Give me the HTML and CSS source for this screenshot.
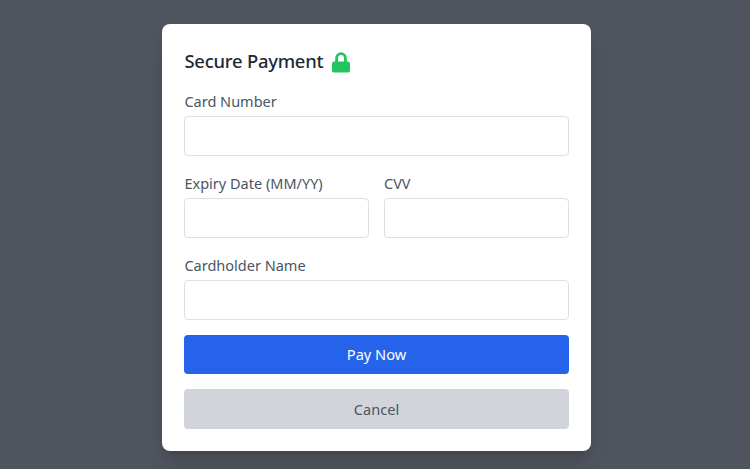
FILE: index.html
```html
<!DOCTYPE html>
<html lang="en">
<head>
<meta charset="utf-8">
<title>Secure Payment</title>
<link rel="stylesheet" href="styles.css">
</head>
<body>
<main class="card">
  <h1 class="title">Secure Payment
    <svg class="lock" viewBox="0 0 18 21" width="18" height="21" aria-hidden="true">
      <path d="M4.6 10V6a4.4 4.4 0 0 1 8.8 0V10" fill="none" stroke="#22c55e" stroke-width="2.8"/>
      <rect x="0" y="9.6" width="18" height="11" rx="2.2" fill="#22c55e"/>
    </svg>
  </h1>
  <form class="form">
    <div class="field">
      <label class="label">Card Number</label>
      <input class="input" type="text">
    </div>
    <div class="row">
      <div class="field">
        <label class="label">Expiry Date (MM/YY)</label>
        <input class="input" type="text">
      </div>
      <div class="field">
        <label class="label">CVV</label>
        <input class="input" type="text">
      </div>
    </div>
    <div class="field">
      <label class="label">Cardholder Name</label>
      <input class="input" type="text">
    </div>
    <button class="btn primary" type="button">Pay Now</button>
    <button class="btn secondary" type="button">Cancel</button>
  </form>
</main>
</body>
</html>
```
FILE: styles.css
```css
* { box-sizing: border-box; }
html, body { height: 100%; }
body {
  margin: 0;
  padding: 6px 0 0 3px;
  background: #50545f;
  display: flex;
  align-items: center;
  justify-content: center;
  font-family: "Noto Sans", sans-serif;
}
.card {
  width: 429.5px;
  height: 427px;
  padding: 22px 22.7px;
  background: #fff;
  border-radius: 8px;
  box-shadow: 0 14px 20px -4px rgba(0,0,0,.14), 0 6px 8px -4px rgba(0,0,0,.12);
}
.title {
  margin: 0 0 14.7px;
  height: 30px;
  display: flex;
  align-items: center;
  gap: 8.5px;
  font-size: 18.4px;
  font-weight: 500;
  letter-spacing: -0.22px;
  line-height: 30px;
  color: #1f2937;
}
.lock { margin-top: 2px; }
.form { display: flex; flex-direction: column; gap: 15px; }
.field { display: flex; flex-direction: column; min-width: 0; flex: 1; }
.row { display: flex; gap: 15px; margin-top: 2px; }
.row + .field { margin-top: 2px; }
.label {
  height: 21px;
  margin-bottom: 4px;
  font-size: 14.5px;
  line-height: 21px;
  color: #4b5563;
}
.input {
  width: 100%;
  height: 40px;
  border: 1px solid #dcdfe4;
  border-radius: 4px;
  background: #fff;
}
.btn {
  height: 39.5px;
  border: 0;
  border-radius: 4px;
  font: 400 14.6px "Noto Sans", sans-serif;
}
.primary { background: #2563eb; color: #fff; }
.secondary { background: #d1d5db; color: #4b5563; }
```
